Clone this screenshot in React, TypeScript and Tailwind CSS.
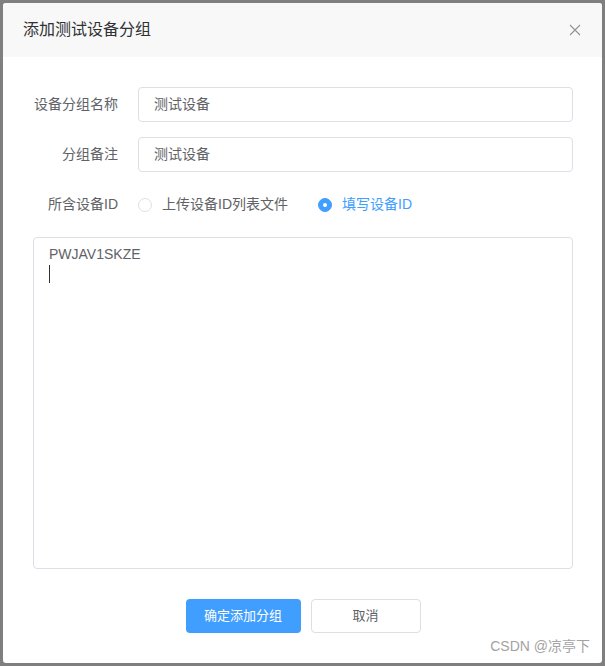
import { useState } from 'react'

const FONT = { fontFamily: '"Liberation Sans", "Noto Sans CJK SC", sans-serif' }

export default function App() {
  const [mode, setMode] = useState<'upload' | 'input'>('input')

  return (
    <div className="w-[605px] h-[666px] bg-[#7f7f7f] p-[3px]" style={FONT}>
      <div className="relative w-full h-full bg-white rounded-[3px] flex flex-col overflow-hidden">
        {/* header */}
        <div className="h-[54px] bg-[#f8f8f8] flex items-center pl-[20px] pr-[21px]">
          <span className="flex-1 text-[16px] text-[#303133]">添加测试设备分组</span>
          <svg className="w-[12px] h-[12px] text-[#909399]" viewBox="0 0 12 12" fill="none" stroke="currentColor" strokeWidth={1.1}>
            <path d="M1 1l10 10M11 1L1 11" />
          </svg>
        </div>

        {/* form */}
        <div className="flex flex-col pt-[30px] pl-[30px] pr-[29px] text-[14px]">
          <div className="flex items-center h-[35px]">
            <label className="w-[85px] text-right text-[#606266]">设备分组名称</label>
            <div className="flex-1 ml-[20px] h-[35px] border border-[#dcdfe6] rounded-[4px] flex items-center px-[15px] text-[#606266]">
              测试设备
            </div>
          </div>
          <div className="flex items-center h-[35px] mt-[15px]">
            <label className="w-[85px] text-right text-[#606266]">分组备注</label>
            <div className="flex-1 ml-[20px] h-[35px] border border-[#dcdfe6] rounded-[4px] flex items-center px-[15px] text-[#606266]">
              测试设备
            </div>
          </div>
          <div className="flex items-center h-[35px] mt-[15px]">
            <label className="w-[85px] text-right text-[#606266]">所含设备ID</label>
            <div className="ml-[20px] flex items-center">
              <button className="flex items-center" onClick={() => setMode('upload')}>
                <span
                  className={`w-[14px] h-[14px] rounded-full border flex items-center justify-center ${
                    mode === 'upload' ? 'border-[#409eff] bg-[#409eff]' : 'border-[#dcdfe6] bg-white'
                  }`}
                >
                  {mode === 'upload' && <span className="w-[4px] h-[4px] rounded-full bg-white" />}
                </span>
                <span className={`ml-[10px] ${mode === 'upload' ? 'text-[#409eff]' : 'text-[#606266]'}`}>
                  上传设备ID列表文件
                </span>
              </button>
              <button className="flex items-center ml-[30px]" onClick={() => setMode('input')}>
                <span
                  className={`w-[14px] h-[14px] rounded-full border flex items-center justify-center ${
                    mode === 'input' ? 'border-[#409eff] bg-[#409eff]' : 'border-[#dcdfe6] bg-white'
                  }`}
                >
                  {mode === 'input' && <span className="w-[4px] h-[4px] rounded-full bg-white" />}
                </span>
                <span className={`ml-[10px] ${mode === 'input' ? 'text-[#409eff]' : 'text-[#606266]'}`}>
                  填写设备ID
                </span>
              </button>
            </div>
          </div>

          {/* textarea */}
          <div className="mt-[15px] h-[332px] border border-[#dcdfe6] rounded-[4px] pl-[15px] pt-[6px] text-[14px] text-[#606266] leading-[20px]">
            <div>PWJAV1SKZE</div>
            <div className="w-px h-[18px] bg-[#303133] mt-[1px]" />
          </div>
        </div>

        {/* footer */}
        <div className="flex justify-center gap-[10px] mt-[30px] pl-[1px] text-[13px]">
          <button className="w-[115px] h-[34px] rounded-[4px] bg-[#409eff] text-white">确定添加分组</button>
          <button className="w-[110px] h-[34px] rounded-[4px] border border-[#dcdfe6] bg-white text-[#606266]">取消</button>
        </div>

        <div className="absolute right-[12px] bottom-[6px] text-[14px] text-[#a3a3a3]">CSDN @凉亭下</div>
      </div>
    </div>
  )
}
